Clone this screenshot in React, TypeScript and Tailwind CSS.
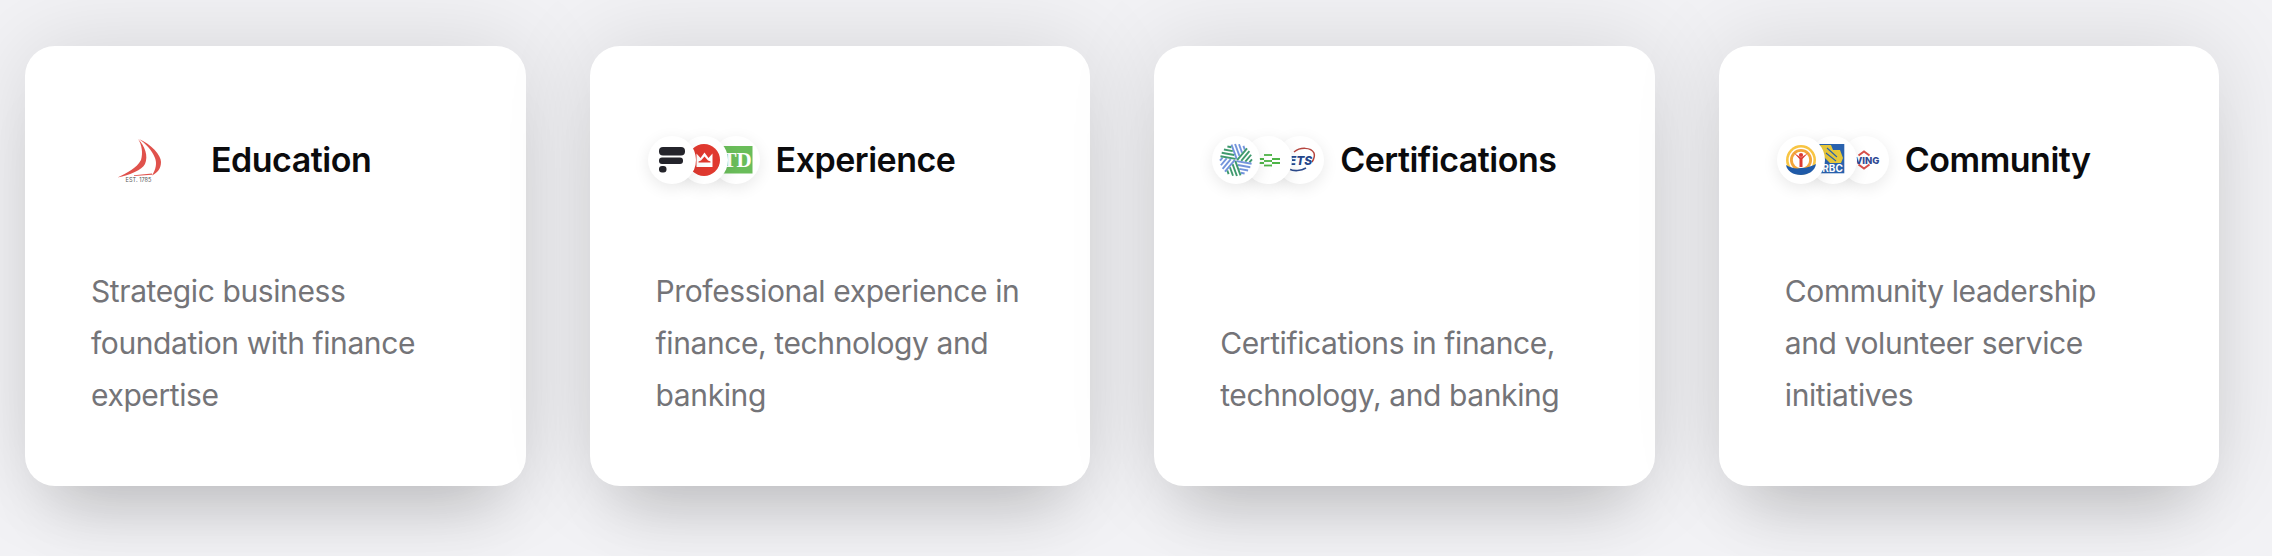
import React from "react";

const SANS = "font-['Inter','Liberation_Sans',sans-serif]";

const Circle: React.FC<{ z: string; first?: boolean; children: React.ReactNode }> = ({ z, first, children }) => (
  <div className={`relative h-12 w-12 shrink-0 rounded-full bg-white shadow-[0_4px_16px_rgba(0,0,0,0.09)] ${z} ${first ? "" : "-ml-4"}`}>
    <svg viewBox="0 0 48 48" className="h-12 w-12">
      {children}
    </svg>
  </div>
);

const SailLogo = () => (
  <svg viewBox="0 0 48 48" className="h-12 w-12 overflow-visible">
    <path d="M23 3 C30 10 33.5 20 30 28 C27 34 15 39 2.5 41.5 C12 37 22 32 26 24 C28 17 27 9 23 3 Z" fill="#e0524c" />
    <path d="M24 3 C36 8 46 19 46 26 C46 33 42 37 37 39.5 C41 33 42 27 40 22 C37 14 30 7 24 3 Z" fill="#e0524c" />
    <path d="M19 39.2 L37 37.6 L37 38.8 L19 40 Z" fill="#e0524c" />
    <text x="23.5" y="46" textAnchor="middle" fontSize="5.6" fill="#555" fontFamily="Inter, sans-serif">EST. 1785</text>
  </svg>
);

const FlooLogo = () => (
  <>
    <rect x="11" y="11" width="26" height="8.5" rx="4" fill="#24242b" />
    <rect x="11" y="21.5" width="24" height="6.5" rx="3" fill="#24242b" />
    <rect x="11" y="30" width="7.5" height="6.5" rx="3" fill="#24242b" />
  </>
);

const BmoLogo = () => (
  <>
    <circle cx="24" cy="24" r="16" fill="#e0392f" />
    <path d="M16.5 31 V17.5 L20.5 22 L24.5 16.5 L28.5 22 L32.5 17.5 V31 Z" fill="#fff" />
    <path d="M18.5 25.5 L21 24.5 L24.5 20.5 L28 24.5 L30.5 25.5 V26.5 H18.5 Z" fill="#e0392f" />
  </>
);

const TdLogo = () => (
  <>
    <rect x="8" y="10" width="32.5" height="27.5" fill="#6abd5a" />
    <text x="25" y="31" textAnchor="middle" fontSize="21" fontWeight="700" fill="#fff" fontFamily="Liberation Serif, serif">TD</text>
  </>
);

const offsets = [1, 4.6, 8.2, 11.8];

const PinwheelLogo = () => (
  <g transform="rotate(-20 24 24)">
    {[0, 60, 120, 180, 240, 300].map((a, i) => (
      <g key={a} transform={`rotate(${a} 24 24)`} stroke={i % 2 ? "#3f9a6e" : "#7394dc"} strokeWidth="1.9">
        {offsets.map((d) => (
          <line key={d} x1={24 + d} y1={24 - d * 0.577} x2={24 + d} y2={24 - Math.sqrt(256 - d * d)} />
        ))}
      </g>
    ))}
  </g>
);

const DashesLogo = () => (
  <g stroke="#4fb548" strokeWidth="1.8">
    <path d="M20 19 H28" />
    <path d="M12 23 H20 M28 23 H36" />
    <path d="M20 25 H28" />
    <path d="M12 27 H20 M28 27 H36" />
    <path d="M20 29.5 H28" />
  </g>
);

const EtsLogo = () => (
  <>
    <path d="M18 16 C24 11 35 11 38 17 C39 20 38 23 36 26" fill="none" stroke="#b5453f" strokeWidth="1.5" />
    <path d="M13 33 C18 35.5 25 35 30 32" fill="none" stroke="#2c4a8c" strokeWidth="1.6" />
    <text x="24.5" y="28.5" textAnchor="middle" fontSize="12" fontWeight="800" fontStyle="italic" fill="#25468c" fontFamily="Inter, sans-serif">ETS</text>
  </>
);

const UnitedWayLogo = () => (
  <>
    <circle cx="24" cy="24" r="15" fill="#f8c543" />
    <circle cx="24" cy="24" r="12.4" fill="#fff" />
    <circle cx="24" cy="24" r="11" fill="#f3a63a" />
    <circle cx="24" cy="24" r="8.2" fill="#fff" />
    <circle cx="24" cy="19" r="2.1" fill="#dd3a32" />
    <path d="M17 17 L22.5 23 V31 H25.5 V23 L31 17 L24 21.5 Z" fill="#dd3a32" />
    <path d="M9 29 C14 32 19 33 24 32 C30 32 35 30 39 28 C38 35 31 39 24 39 C16 39 10 35 9 29 Z" fill="#1f5aa8" />
  </>
);

const RbcLogo = () => (
  <>
    <rect x="10.3" y="8" width="25" height="29.3" fill="#2a62ae" />
    <path d="M11 9 L22 9 L24 14 L31 14 L34 22 L32 27 L21 27 L14 20 Z" fill="#e8c83a" />
    <path d="M18 12 L28 21 M17 17 L27 25" stroke="#2a62ae" strokeWidth="1.1" />
    <text x="23.5" y="36" textAnchor="middle" fontSize="10" fontWeight="700" fill="#fff" fontFamily="Inter, sans-serif">RBC</text>
  </>
);

const LivingLogo = () => (
  <>
    <path d="M17.5 19.5 L23 15.5 L28.5 19.5" fill="none" stroke="#d8504a" strokeWidth="2" />
    <path d="M17.5 28.5 L23 32.5 L28.5 28.5" fill="none" stroke="#d8504a" strokeWidth="2" />
    <text x="38.5" y="27.5" textAnchor="end" fontSize="9.5" fontWeight="800" fill="#2f4a94" fontFamily="Inter, sans-serif">LIVING</text>
  </>
);

type Card = { title: string; lines: string[]; logos: React.ReactNode };

const cards: Card[] = [
  {
    title: "Education",
    lines: ["Strategic business", "foundation with finance", "expertise"],
    logos: <SailLogo />,
  },
  {
    title: "Experience",
    lines: ["Professional experience in", "finance, technology and", "banking"],
    logos: (
      <>
        <Circle z="z-30" first><FlooLogo /></Circle>
        <Circle z="z-20"><BmoLogo /></Circle>
        <Circle z="z-10"><TdLogo /></Circle>
      </>
    ),
  },
  {
    title: "Certifications",
    lines: ["Certifications in finance,", "technology, and banking"],
    logos: (
      <>
        <Circle z="z-30" first><PinwheelLogo /></Circle>
        <Circle z="z-20"><DashesLogo /></Circle>
        <Circle z="z-10"><EtsLogo /></Circle>
      </>
    ),
  },
  {
    title: "Community",
    lines: ["Community leadership", "and volunteer service", "initiatives"],
    logos: (
      <>
        <Circle z="z-30" first><UnitedWayLogo /></Circle>
        <Circle z="z-20"><RbcLogo /></Circle>
        <Circle z="z-10"><LivingLogo /></Circle>
      </>
    ),
  },
];

export default function App() {
  return (
    <div className={`h-[556px] w-[2272px] overflow-hidden bg-[#f2f2f5] pl-[25px] pt-[46px] ${SANS}`}>
      <div className="flex gap-16">
        {cards.map((card) => (
          <div
            key={card.title}
            className="flex h-[440px] w-[500.6px] shrink-0 flex-col rounded-[30px] bg-white pb-[65px] pl-[58px] pt-[90px] shadow-[0_0_90px_rgba(0,0,0,0.12),0_50px_60px_-30px_rgba(0,0,0,0.16)]"
          >
            <div className="flex items-center gap-4">
              <div className="flex w-[112px] justify-center">{card.logos}</div>
              <h3 className="text-[34px] font-semibold leading-[48px] tracking-[-0.5px] text-[#0b0b0d]">{card.title}</h3>
            </div>
            <p className="mt-auto pl-2 text-[30px] leading-[52px] tracking-[-0.4px] text-[#747478]">
              {card.lines.map((line) => (
                <span key={line} className="block whitespace-nowrap">{line}</span>
              ))}
            </p>
          </div>
        ))}
      </div>
    </div>
  );
}
